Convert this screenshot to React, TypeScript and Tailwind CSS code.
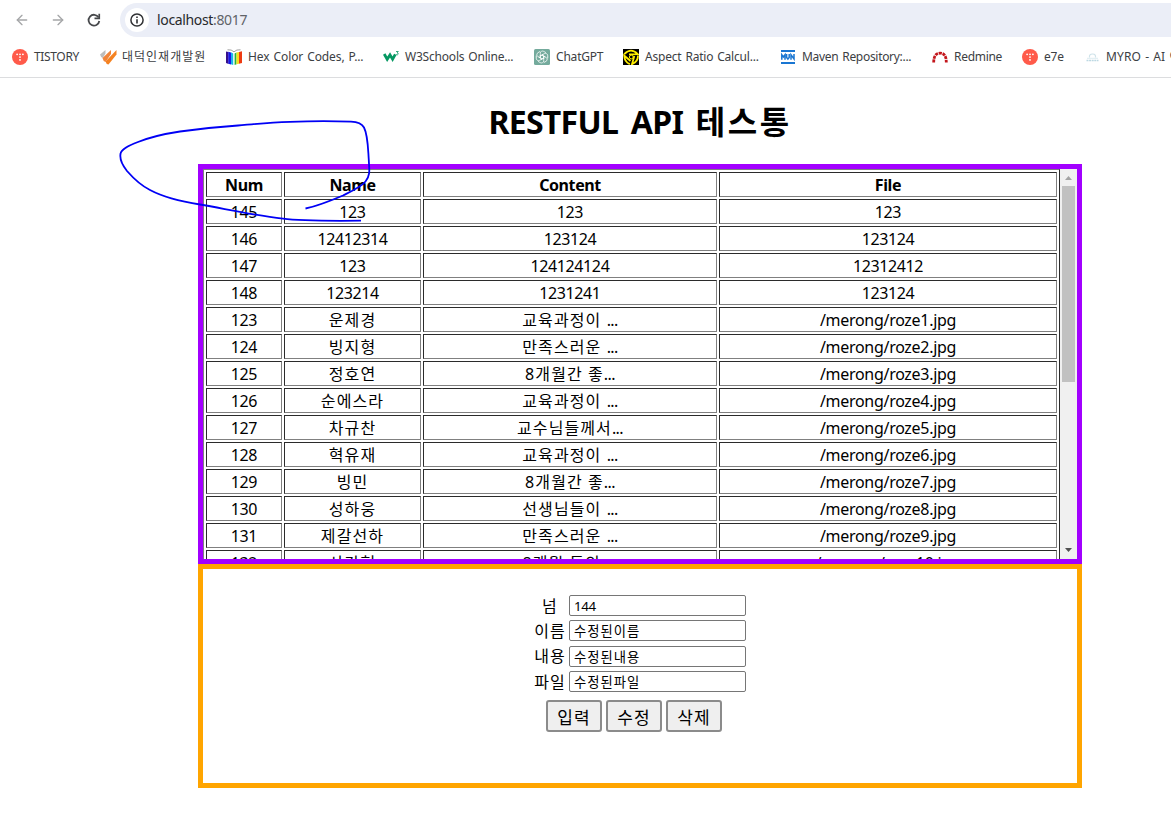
import { ArrowLeft, ArrowRight } from 'lucide-react';
import { ReactNode } from 'react';

const columns = [
  { label: 'Num', width: 'w-[76px]' },
  { label: 'Name', width: 'w-[137px]' },
  { label: 'Content', width: 'w-[294px]' },
  { label: 'File', width: 'w-[338px]' },
];

const rows = [
  ['145', '123', '123', '123'],
  ['146', '12412314', '123124', '123124'],
  ['147', '123', '124124124', '12312412'],
  ['148', '123214', '1231241', '123124'],
  ['123', '운제경', '교육과정이 ...', '/merong/roze1.jpg'],
  ['124', '빙지형', '만족스러운 ...', '/merong/roze2.jpg'],
  ['125', '정호연', '8개월간 좋...', '/merong/roze3.jpg'],
  ['126', '순에스라', '교육과정이 ...', '/merong/roze4.jpg'],
  ['127', '차규찬', '교수님들께서...', '/merong/roze5.jpg'],
  ['128', '혁유재', '교육과정이 ...', '/merong/roze6.jpg'],
  ['129', '빙민', '8개월간 좋...', '/merong/roze7.jpg'],
  ['130', '성하웅', '선생님들이 ...', '/merong/roze8.jpg'],
  ['131', '제갈선하', '만족스러운 ...', '/merong/roze9.jpg'],
  ['132', '사강현', '8개월 동안 ...', '/merong/roze10.jpg'],
];

const fields = [
  { label: '넘', value: '144', tracking: 'tracking-[-0.4px]', height: 'h-[25px]' },
  { label: '이름', value: '수정된이름', tracking: 'tracking-[1px]', height: 'h-[25px]' },
  { label: '내용', value: '수정된내용', tracking: 'tracking-[1px]', height: 'h-[26px]' },
  { label: '파일', value: '수정된파일', tracking: 'tracking-[1px]', height: 'h-[25px]' },
];

const hasKorean = (text: string) => /[가-힣]/.test(text);

function cellTracking(text: string) {
  if (hasKorean(text)) return 'tracking-[1.1px]';
  if (text.startsWith('/')) return 'tracking-[-0.3px]';
  return 'tracking-[-0.4px]';
}

function CellText({ text }: { text: string }) {
  if (!text.endsWith('...')) return <>{text}</>;
  return (
    <>
      {text.slice(0, -3)}
      <span className="tracking-[-0.6px]">...</span>
    </>
  );
}

function TistoryIcon() {
  return (
    <svg width="16" height="16" viewBox="0 0 16 16">
      <circle cx="8" cy="8" r="8" fill="#ff5a4a" />
      <g fill="#fff">
        <circle cx="5.1" cy="5.3" r="0.9" />
        <circle cx="8" cy="5.3" r="0.9" />
        <circle cx="10.9" cy="5.3" r="0.9" />
        <circle cx="8" cy="8.1" r="0.9" />
        <circle cx="8" cy="10.9" r="0.9" />
      </g>
    </svg>
  );
}

function FlameIcon() {
  return (
    <svg width="17" height="16" viewBox="0 0 17 16">
      <path d="M0 5.5 5.5 1v3.500L2.800 9Q.5 8 0 5.500Z" fill="#bdbdbd" />
      <path d="M2.500 9 11 1v4L5.500 13Q3 12 2.500 9Z" fill="#f0843a" />
      <path d="M5.500 12.500 16.500 1v4.500L8.500 15.500Q6 15 5.500 12.500Z" fill="#f58220" />
    </svg>
  );
}

function ColorBookIcon() {
  return (
    <svg width="16" height="16" viewBox="0 0 16 16">
      <path d="M0 2.5 2.5 3v12L0 14Z" fill="#35108c" />
      <path d="M2.3 2.8 5 3.4v12l-2.7-.7Z" fill="#1717e8" />
      <path d="M5 3.3 7.2 4.5V16L5 15.2Z" fill="#19b6e8" />
      <path d="M8.6 4.5 10.5 3.4v11.9L8.6 16Z" fill="#23b33c" />
      <path d="M10.5 3.4 13 2.9v11.8l-2.5.6Z" fill="#f5df1c" />
      <path d="M13 2.9 16 2.3v11.8l-3 .7Z" fill="#ee3b12" />
      <path d="M1.5.8Q5.5.3 8 2.8 10.5.3 14.5.8" fill="none" stroke="#888" strokeWidth="0.8" />
    </svg>
  );
}

function W3Icon() {
  return (
    <svg width="16" height="16" viewBox="0 0 16 16">
      <path d="M1.2 5 4.200 10.200 7 5.900l2.600 4.300L12.300 5.400" fill="none" stroke="#059862" strokeWidth="2.800" />
      <path d="M13 2.500h2.300l-1.200 1.400q1.400.1 1.100 1.300-.5 1-2.100.4" fill="none" stroke="#059862" strokeWidth="0.8" />
    </svg>
  );
}

function GptIcon() {
  return (
    <svg width="16" height="16" viewBox="0 0 16 16">
      <rect width="16" height="16" rx="1.5" fill="#74aa9c" />
      <g fill="none" stroke="#fff" strokeWidth="0.75">
        {[0, 60, 120, 180, 240, 300].map((angle) => (
          <path
            key={angle}
            d="M6.300 7V4.200A2.300 2.300 0 0 1 9.800 2.400L12 3.700M6.300 7 8 6l2.600 1.500"
            transform={`rotate(${angle} 8 8)`}
          />
        ))}
      </g>
    </svg>
  );
}

function RatioIcon() {
  return (
    <svg width="16" height="16" viewBox="0 0 16 16">
      <rect width="16" height="16" fill="#000" />
      <g fill="none" stroke="#ffee00">
        <path
          d="M1.300 5.200Q8-1.800 14.700 5.200L6 5.400M15 6.500Q15 13 9 15.200L11.300 7M6.800 15.200Q1.500 13 1.200 6.500L7.500 12"
          strokeWidth="1.800"
        />
        <circle cx="8.300" cy="8" r="1.900" strokeWidth="1" />
      </g>
    </svg>
  );
}

function MavenIcon() {
  return (
    <svg width="16" height="16" viewBox="0 0 16 16">
      <path d="M1 1h14v2H1zM1 13h14v2H1z" fill="#1976d2" />
      <path
        d="M1.8 10.8V5.8L3.4 8 5 5.8v5M6.6 5v3.4L7.9 10 9.2 8.400V5M11 10.8V5.8l3 4.2V5"
        fill="none"
        stroke="#1976d2"
        strokeWidth="1.5"
      />
    </svg>
  );
}

function RedmineIcon() {
  return (
    <svg width="16" height="16" viewBox="0 0 16 16">
      <path
        d="M1.700 13.500Q1.700 4.300 8 4.200T14.300 13.500"
        fill="none"
        stroke="#c3161c"
        strokeWidth="2.800"
        strokeDasharray="3 0.8"
      />
    </svg>
  );
}

function MyroIcon() {
  return (
    <svg width="13" height="16" viewBox="0 0 13 16">
      <path d="M3.5 8.5Q3 5.2 6.5 5t3 3.5" fill="none" stroke="#cfe3ea" strokeWidth="1.2" />
      <path d="M1 9.3h11" stroke="#dcebf0" strokeWidth="1" />
      <path d="M.5 11.5h12" stroke="#bcd8e2" strokeWidth="1.6" strokeDasharray="2 0.6" />
    </svg>
  );
}

const bookmarks: { label: string; icon: ReactNode; className: string }[] = [
  { label: 'TISTORY', icon: <TistoryIcon />, className: 'w-[88px] tracking-[-0.35px]' },
  { label: '대덕인재개발원', icon: <FlameIcon />, className: 'w-[126px] tracking-[1px]' },
  { label: 'Hex Color Codes, P...', icon: <ColorBookIcon />, className: 'w-[157px] tracking-[-0.1px]' },
  { label: 'W3Schools Online...', icon: <W3Icon />, className: 'w-[151px] tracking-[-0.2px]' },
  { label: 'ChatGPT', icon: <GptIcon />, className: 'w-[89px] tracking-[-0.2px]' },
  { label: 'Aspect Ratio Calcul...', icon: <RatioIcon />, className: 'w-[157px] tracking-[-0.2px]' },
  { label: 'Maven Repository:...', icon: <MavenIcon />, className: 'w-[152px] tracking-[-0.3px]' },
  { label: 'Redmine', icon: <RedmineIcon />, className: 'w-[90px] tracking-[-0.3px]' },
  { label: 'e7e', icon: <TistoryIcon />, className: 'w-[62px] tracking-[-0.2px]' },
  { label: 'MYRO - AI 여', icon: <MyroIcon />, className: 'w-[120px] tracking-[0.1px]' },
];

function BrowserBar() {
  return (
    <header className="h-[78px] border-b border-[#dcdddf] bg-white pt-[3px] text-[#3c4043]">
      <div className="flex h-[34px] items-center">
        <div className="flex w-[120px] items-center pl-[14px]">
          <ArrowLeft size={16} strokeWidth={2} className="text-[#a5a6a8]" />
          <ArrowRight size={16} strokeWidth={2} className="ml-5 text-[#a5a6a8]" />
          <svg width="16" height="16" viewBox="0 0 16 16" className="ml-5">
            <path d="M12.6 5.4A5.4 5.4 0 1 0 13.3 9" fill="none" stroke="#46484b" strokeWidth="1.8" />
            <path d="M14.1 1.7v5.6H8.5V5.6h3.9V1.7Z" fill="#46484b" />
          </svg>
        </div>
        <div className="flex h-[34px] flex-1 items-center rounded-l-full bg-[#ebeef7] pl-[5px]">
          <span className="flex size-6 items-center justify-center rounded-full bg-white">
            <svg width="14" height="14" viewBox="0 0 14 14">
              <circle cx="7" cy="7" r="6.1" fill="none" stroke="#303134" strokeWidth="1.5" />
              <path d="M6.2 3.5h1.6V5H6.2zM6.2 6.2h1.6v4.3H6.2z" fill="#303134" />
            </svg>
          </span>
          <span className="ml-2 text-sm tracking-[-0.35px] text-[#28292c]">
            localhost<span className="text-[#5f6368]">:8017</span>
          </span>
        </div>
      </div>
      <nav className="flex h-10 items-center overflow-hidden pl-3 text-xs [word-spacing:1px]">
        {bookmarks.map((item, i) => (
          <div key={i} className={`flex shrink-0 items-center whitespace-nowrap ${item.className}`}>
            <span className={i === 9 ? 'w-[22px] pl-[2px]' : 'w-[22px]'}>{item.icon}</span>
            <span>{item.label}</span>
          </div>
        ))}
      </nav>
    </header>
  );
}

function Scrollbar() {
  return (
    <div className="flex w-[17px] flex-col items-center bg-[#f0f0f0]">
      <svg width="17" height="17" viewBox="0 0 17 17">
        <path d="M5 11 8.5 7 12 11Z" fill="#a3a3a3" />
      </svg>
      <div className="h-[196px] w-[13px] bg-[#c1c1c1]" />
      <svg width="17" height="17" viewBox="0 0 17 17" className="mt-auto">
        <path d="M5 6 8.5 10 12 6Z" fill="#505050" />
      </svg>
    </div>
  );
}

const cellClass =
  'h-[25px] border border-t-[#2b2b2b] border-r-[#808080] border-b-[#808080] border-l-[#2b2b2b] px-0 pt-[2px] pb-0 leading-[21px] whitespace-nowrap';

function DataTable() {
  return (
    <div className="flex h-[400px] overflow-hidden border-5 border-[#a200ff]">
      <table className="w-[857px] table-fixed border-separate border-spacing-0.5 self-start border border-t-[#808080] border-r-[#2b2b2b] border-b-[#2b2b2b] border-l-[#808080] text-center text-base">
        <thead>
          <tr>
            {columns.map((col) => (
              <th key={col.label} className={`${cellClass} ${col.width} font-bold tracking-[-0.4px]`}>
                {col.label}
              </th>
            ))}
          </tr>
        </thead>
        <tbody>
          {rows.map((row) => (
            <tr key={row[0]}>
              {row.map((text, i) => (
                <td key={i} className={`${cellClass} ${cellTracking(text)}`}>
                  <CellText text={text} />
                </td>
              ))}
            </tr>
          ))}
        </tbody>
      </table>
      <Scrollbar />
    </div>
  );
}

function EditForm() {
  return (
    <form className="flex h-[224px] flex-col items-center border-5 border-[#ffa500] pt-6">
      {fields.map((field) => (
        <label key={field.label} className={`flex items-center ${field.height}`}>
          <span className="w-[35px] pr-[3px] text-center text-base tracking-[1.1px]">{field.label}</span>
          <input
            defaultValue={field.value}
            className={`h-[21px] w-[177px] rounded-[2px] border border-[#767676] bg-white px-1 text-[13.33px] ${field.tracking}`}
          />
        </label>
      ))}
      <div className="mt-[6px] mr-3 flex gap-1">
        {['입력', '수정', '삭제'].map((label) => (
          <button
            key={label}
            type="button"
            className="h-8 w-14 rounded-[3px] border-2 border-[#8b8b8b] bg-[#efefef] pt-[2px] text-[17px] leading-none tracking-[1.1px]"
          >
            {label}
          </button>
        ))}
      </div>
    </form>
  );
}

export default function App() {
  return (
    <div className="relative h-[823px] w-[1171px] overflow-hidden bg-white font-['Noto_Sans','Noto_Sans_CJK_KR',sans-serif] text-black">
      <BrowserBar />
      <main className="ml-[198px] w-[884px]">
        <h1 className="flex h-[86px] items-center justify-center pt-[2px] text-[32px] font-bold tracking-[-0.7px] whitespace-pre [word-spacing:5px]">
          {'RESTFUL API '}
          <span className="tracking-[2.5px]">테스통</span>
        </h1>
        <DataTable />
        <EditForm />
      </main>

      {/* freehand pen stroke over the page */}
      <svg width="260" height="110" viewBox="115 115 260 110" className="absolute top-[115px] left-[115px]">
        <path
          d="M305.5 208.5C318 206 330 201 343 195.500C352 191 361 187 365.500 181.500C371 175 369 168 368.800 160C368 149 368 135 364 127.500C361.500 123 357 122 351 121.700C336 121 310 121 290 121.800C268 122.500 255 124 238 125.500C216 127 198 129 180 131.500C160 134.500 148 138 138 142C129 145.500 121 149 120.500 154C119.500 160 123 166 127 171C134 179 140 185 150 190C165 198 184 202 200 204.500C226 209 252 215 283 218.700C300 221 330 221 361 220.700"
          fill="none"
          stroke="#0000f5"
          strokeWidth="1.8"
        />
      </svg>
    </div>
  );
}
